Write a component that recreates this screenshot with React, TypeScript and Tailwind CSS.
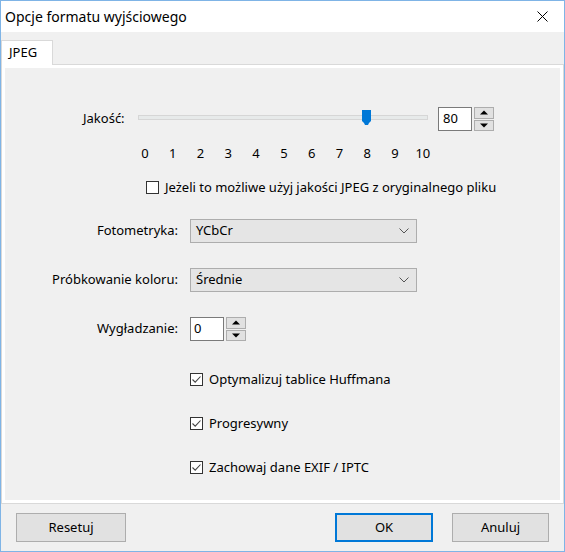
import React from "react";

const font = { fontFamily: '"Noto Sans", "Open Sans", sans-serif' };

function Spin() {
  return (
    <div className="flex flex-col ml-[2px] w-[20px] h-[24px] gap-[1px]">
      <div className="flex-1 border border-[#adadad] bg-[#e1e1e1] flex items-center justify-center">
        <svg width="8" height="5" viewBox="0 0 8 5"><path d="M0 4.5 L4 0.5 L8 4.5 Z" fill="#000" /></svg>
      </div>
      <div className="flex-1 border border-[#adadad] bg-[#e1e1e1] flex items-center justify-center">
        <svg width="8" height="5" viewBox="0 0 8 5"><path d="M0 0.5 L4 4.5 L8 0.5 Z" fill="#000" /></svg>
      </div>
    </div>
  );
}

function Check({ checked, label }: { checked: boolean; label: string }) {
  return (
    <div className="flex items-center h-[16px]">
      <div className="w-[13px] h-[13px] border border-[#333333] bg-white flex items-center justify-center">
        {checked && (
          <svg width="11" height="11" viewBox="0 0 11 11">
            <path d="M1.5 5.5 L4.2 8.2 L9.5 2.5" fill="none" stroke="#444" strokeWidth="1.1" />
          </svg>
        )}
      </div>
      <span className="ml-[6px] text-[13px] text-black leading-[16px]">{label}</span>
    </div>
  );
}

function Select({ value }: { value: string }) {
  return (
    <div className="w-[227px] h-[24px] border border-[#adadad] bg-[#e5e5e5] flex items-center justify-between pl-[5px] pr-[7px]">
      <span className="text-[13px] text-black">{value}</span>
      <svg width="10" height="6" viewBox="0 0 10 6">
        <path d="M0.5 0.5 L5 5 L9.5 0.5" fill="none" stroke="#555" strokeWidth="1" />
      </svg>
    </div>
  );
}

function Button({ label, w, primary }: { label: string; w: string; primary?: boolean }) {
  return (
    <div
      className={`${w} h-[29px] flex items-center justify-center bg-[#e1e1e1] text-[13px] text-black ${
        primary ? "border-2 border-[#0078d7]" : "border border-[#adadad]"
      }`}
    >
      {label}
    </div>
  );
}

export default function App() {
  const ticks = ["0", "1", "2", "3", "4", "5", "6", "7", "8", "9", "10"];
  return (
    <div style={font} className="w-[565px] h-[552px] border border-[#7fb4e6] bg-[#f0f0f0] flex flex-col text-black">
      <div className="h-[31px] bg-white flex items-center justify-between pl-[4px] pr-[16px]">
        <span className="text-[14px] leading-[20px]">Opcje formatu wyjściowego</span>
        <svg width="11" height="11" viewBox="0 0 11 11">
          <path d="M0.5 0.5 L10.5 10.5 M10.5 0.5 L0.5 10.5" stroke="#000" strokeWidth="1" />
        </svg>
      </div>
      <div className="flex flex-col pt-[8px]">
        <div className="flex">
          <div className="w-[52px] h-[25px] bg-white border border-[#d9d9d9] border-b-0 flex items-center pl-[7px] text-[13px] relative z-10">
            JPEG
          </div>
        </div>
        <div className="-mt-[1px] h-[440px] border border-[#d9d9d9] bg-white p-[3px]">
          <div className="w-full h-full bg-[#f0f0f0] flex flex-col">
            {/* slider row */}
            <div className="flex items-start mt-[39px] pl-[78px] h-[24px]">
              <span className="w-[55px] text-[13px] leading-[22px]">Jakość:</span>
              <svg width="290" height="18" viewBox="0 0 290 18" className="mt-[2px]">
                <rect x="0.5" y="6.5" width="289" height="4" fill="#e7eaea" stroke="#d6d6d6" />
                <path d="M224 1 H233 V12 L231 14 L230 16 H227 L226 14 L224 12 Z" fill="#0078d7" />
              </svg>
              <div className="ml-[10px] w-[34px] h-[24px] bg-white border border-[#7a7a7a] flex items-center pl-[4px] text-[13px]">
                80
              </div>
              <Spin />
            </div>
            {/* ticks */}
            <div className="flex mt-[14px] pl-[126px] h-[16px]">
              {ticks.map((t) => (
                <span key={t} className="w-[27.8px] text-center text-[13px] leading-[16px]">
                  {t}
                </span>
              ))}
            </div>
            <div className="mt-[18px] pl-[141px]">
              <Check checked={false} label="Jeżeli to możliwe użyj jakości JPEG z oryginalnego pliku" />
            </div>
            <div className="flex items-center mt-[24px]">
              <span className="w-[173px] text-right text-[13px]">Fotometryka:</span>
              <div className="ml-[12px]">
                <Select value="YCbCr" />
              </div>
            </div>
            <div className="flex items-center mt-[25px]">
              <span className="w-[173px] text-right text-[13px]">Próbkowanie koloru:</span>
              <div className="ml-[12px]">
                <Select value="Średnie" />
              </div>
            </div>
            <div className="flex items-center mt-[25px]">
              <span className="w-[173px] text-right text-[13px]">Wygładzanie:</span>
              <div className="ml-[12px] w-[34px] h-[24px] bg-white border border-[#7a7a7a] flex items-center pl-[3px] text-[13px]">
                0
              </div>
              <Spin />
            </div>
            <div className="flex flex-col pl-[185px] mt-[30px] gap-[28px]">
              <Check checked label="Optymalizuj tablice Huffmana" />
              <Check checked label="Progresywny" />
              <Check checked label="Zachowaj dane EXIF / IPTC" />
            </div>
          </div>
        </div>
        <div className="flex items-center mt-[9px] pl-[15px] pr-[15px]">
          <Button label="Resetuj" w="w-[110px]" />
          <div className="flex-1" />
          <Button label="OK" w="w-[98px]" primary />
          <div className="w-[19px]" />
          <Button label="Anuluj" w="w-[97px]" />
        </div>
      </div>
    </div>
  );
}
